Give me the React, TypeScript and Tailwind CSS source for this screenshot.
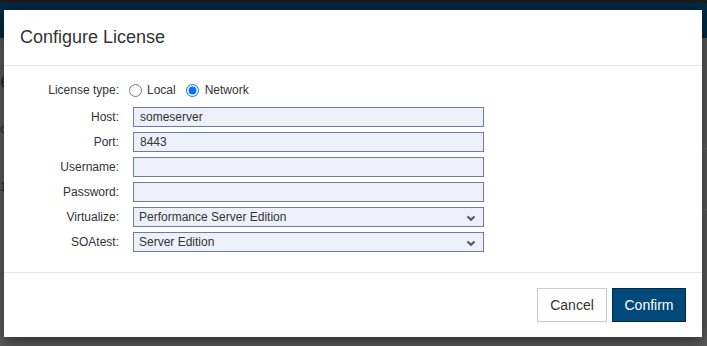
import React from "react";

const Chevron = () => (
  <svg
    className="pointer-events-none absolute right-[7px] top-[7px]"
    width="10"
    height="7"
    viewBox="0 0 10 7"
  >
    <path d="M1.5 1.5 L5 4.8 L8.5 1.5" fill="none" stroke="#555" strokeWidth="2" />
  </svg>
);

function Row({ label, children }: { label: string; children: React.ReactNode }) {
  return (
    <div className="flex h-[20px] items-center">
      <div className="w-[115px] text-right text-[12px] text-[#333]">{label}</div>
      <div className="ml-[14px]">{children}</div>
    </div>
  );
}

function TextInput({ value }: { value: string }) {
  return (
    <input
      readOnly
      value={value}
      className="block h-[20px] w-[351px] border border-[#6e7b99] bg-[#edf0f8] px-[6px] text-[12px] text-[#333] outline-none"
      style={{ fontFamily: '"Liberation Sans", Arial, sans-serif' }}
    />
  );
}

function SelectBox({ value }: { value: string }) {
  return (
    <div className="relative h-[20px] w-[351px] border border-[#6e7b99] bg-[#edf0f8]">
      <div className="pl-[5px] text-[12px] leading-[18px] text-[#333]">{value}</div>
      <Chevron />
    </div>
  );
}

export default function App() {
  return (
    <div
      className="relative h-[346px] w-[707px] overflow-hidden bg-[#5b5b5b]"
      style={{ fontFamily: '"Liberation Sans", Arial, sans-serif' }}
    >
      {/* dimmed page behind */}
      <div className="h-[3px] bg-[#1c1c1c]" />
      <div className="h-[35px] bg-[#012a45]" />
      <div className="flex">
        <div className="w-[4px] overflow-hidden text-[#2e2e2e]">
          <div className="mt-[32px] text-[22px] leading-[22px]">e</div>
          <div className="mt-[28px] text-[12px]">o</div>
          <div className="mt-[40px] text-[12px]">1</div>
        </div>
        <div className="flex-1" />
        <div className="w-[5px]">
          <div className="mt-[110px] h-px bg-[#6a6a6a]" />
          <div className="mt-[60px] h-px bg-[#6a6a6a]" />
        </div>
      </div>

      {/* modal */}
      <div className="absolute left-[4px] top-[10px] flex h-[327px] w-[698px] flex-col bg-white shadow-[0_5px_15px_rgba(0,0,0,0.5)]">
        <div className="flex h-[56px] items-center border-b border-[#e5e5e5] pl-[16px]">
          <h4 className="text-[18px] text-[#333]">Configure License</h4>
        </div>

        <div className="flex flex-1 flex-col border-b border-[#e5e5e5] pt-[14px]">
          <div className="flex h-[20px] items-center">
            <div className="w-[115px] text-right text-[12px] text-[#333]">License type:</div>
            <label className="ml-[10px] flex items-center text-[12px] text-[#333]">
              <input type="radio" name="lt" className="m-0 h-[13px] w-[13px]" readOnly />
              <span className="ml-[5px]">Local</span>
            </label>
            <label className="ml-[10px] flex items-center text-[12px] text-[#333]">
              <input type="radio" name="lt" defaultChecked className="m-0 h-[13px] w-[13px]" />
              <span className="ml-[6px]">Network</span>
            </label>
          </div>
          <div className="mt-[7px] flex flex-col gap-[5px]">
            <Row label="Host:">
              <TextInput value="someserver" />
            </Row>
            <Row label="Port:">
              <TextInput value="8443" />
            </Row>
            <Row label="Username:">
              <TextInput value="" />
            </Row>
            <Row label="Password:">
              <TextInput value="" />
            </Row>
            <Row label="Virtualize:">
              <SelectBox value="Performance Server Edition" />
            </Row>
            <Row label="SOAtest:">
              <SelectBox value="Server Edition" />
            </Row>
          </div>
        </div>

        <div className="flex h-[64px] items-start justify-end gap-[5px] pr-[16px] pt-[15px]">
          <button className="h-[34px] w-[70px] border border-[#cccccc] bg-white text-[14px] text-[#333]">
            Cancel
          </button>
          <button className="h-[34px] w-[74px] border border-[#002b45] bg-[#00497a] text-[14px] text-white">
            Confirm
          </button>
        </div>
      </div>
    </div>
  );
}
